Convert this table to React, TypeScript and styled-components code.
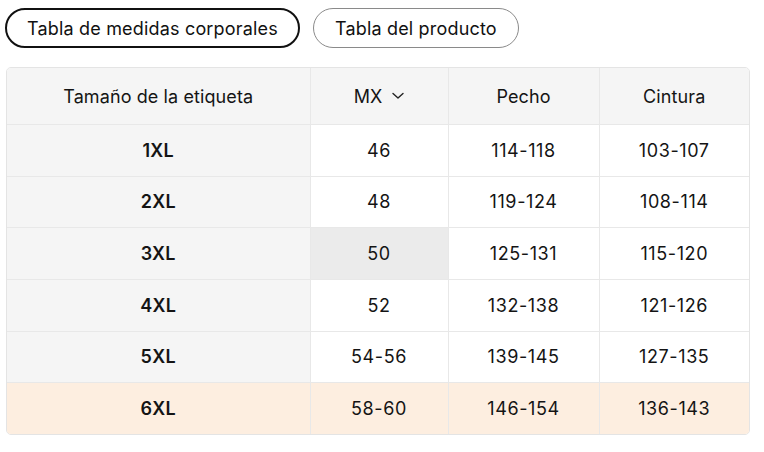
import React from "react";
import styled, { createGlobalStyle } from "styled-components";

const Global = createGlobalStyle`
  html, body { margin: 0; padding: 0; background: #fff; }
  body { font-family: Inter, "Noto Sans", "Liberation Sans", sans-serif; color: #111; }
`;

const Page = styled.div`
  padding: 8px 14px 0 5px;
  display: flex;
  flex-direction: column;
  gap: 19px;
`;

const Tabs = styled.div`
  display: flex;
  gap: 13px;
`;

const Tab = styled.button<{ $active?: boolean }>`
  height: 40px;
  box-sizing: border-box;
  padding: 0 ${(p) => (p.$active ? 20 : 21)}px;
  border-radius: 20px;
  border: ${(p) => (p.$active ? "2px solid #111" : "1px solid #8a8a8a")};
  background: #fff;
  font-family: inherit;
  font-size: 18px;
  letter-spacing: 0.18px;
  color: #111;
  cursor: pointer;
`;

const TableWrap = styled.div`
  margin-left: 1px;
  width: 744px;
  box-sizing: border-box;
  border: 1px solid #e4e4e4;
  border-radius: 5px;
  overflow: hidden;
`;

const Grid = styled.table`
  width: 100%;
  border-collapse: collapse;
  table-layout: fixed;
`;

const Cell = styled.td<{ $bg?: string; $bold?: boolean; $last?: boolean }>`
  height: 50.67px;
  padding: 0;
  text-align: center;
  vertical-align: middle;
  font-size: 18px;
  letter-spacing: ${(p) => (p.$bold ? 0.3 : 0.6)}px;
  font-weight: ${(p) => (p.$bold ? 600 : 400)};
  background: ${(p) => p.$bg ?? "#fff"};
  border-right: ${(p) => (p.$last ? "none" : "1px solid #e8e8e8")};
  border-bottom: 1px solid #e8e8e8;
  color: #141414;
`;

const HeadCell = styled(Cell).attrs({ as: "th" })`
  height: 56px;
  font-weight: 400;
  letter-spacing: 0.1px;
  background: #f5f5f5;
`;

const Row = styled.tr`
  &:last-child td { border-bottom: none; }
`;

const HeadInner = styled.span`
  display: inline-flex;
  align-items: center;
  gap: 10px;
`;

const Chevron = () => (
  <svg width="12" height="8" viewBox="0 0 12 8" fill="none">
    <path d="M1 1.5 L6 6 L11 1.5" stroke="#222" strokeWidth="1.4" strokeLinecap="round" strokeLinejoin="round" />
  </svg>
);

const rows = [
  ["1XL", "46", "114-118", "103-107"],
  ["2XL", "48", "119-124", "108-114"],
  ["3XL", "50", "125-131", "115-120"],
  ["4XL", "52", "132-138", "121-126"],
  ["5XL", "54-56", "139-145", "127-135"],
  ["6XL", "58-60", "146-154", "136-143"],
];

export default function App() {
  return (
    <>
      <Global />
      <Page>
        <Tabs>
          <Tab $active>Tabla de medidas corporales</Tab>
          <Tab>Tabla del producto</Tab>
        </Tabs>
        <TableWrap>
          <Grid>
            <colgroup>
              <col style={{ width: 303 }} />
              <col style={{ width: 138 }} />
              <col style={{ width: 151 }} />
              <col />
            </colgroup>
            <tbody>
              <Row>
                <HeadCell>Tamaño de la etiqueta</HeadCell>
                <HeadCell>
                  <HeadInner>
                    MX <Chevron />
                  </HeadInner>
                </HeadCell>
                <HeadCell>Pecho</HeadCell>
                <HeadCell $last>Cintura</HeadCell>
              </Row>
              {rows.map((r, i) => {
                const final = i === rows.length - 1;
                const rowBg = final ? "#fdeee0" : undefined;
                return (
                  <Row key={r[0]}>
                    <Cell $bold $bg={rowBg ?? "#f5f5f5"}>{r[0]}</Cell>
                    <Cell $bg={rowBg ?? (i === 2 ? "#ebebeb" : "#fff")}>{r[1]}</Cell>
                    <Cell $bg={rowBg}>{r[2]}</Cell>
                    <Cell $bg={rowBg} $last>{r[3]}</Cell>
                  </Row>
                );
              })}
            </tbody>
          </Grid>
        </TableWrap>
      </Page>
    </>
  );
}
